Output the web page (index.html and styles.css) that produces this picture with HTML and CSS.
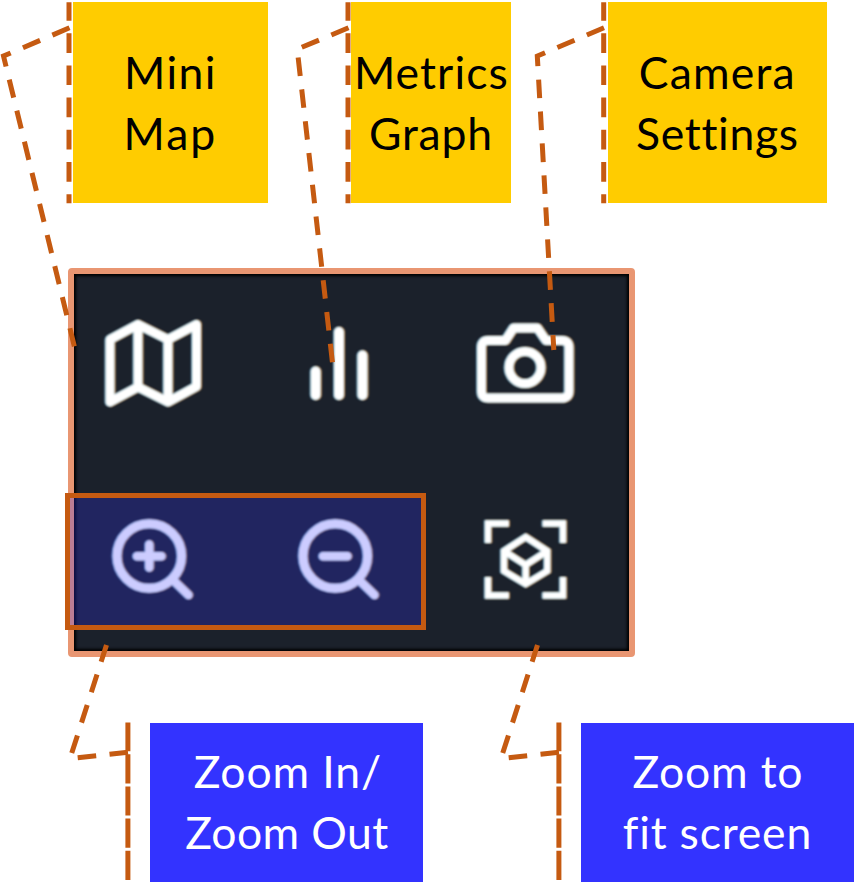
FILE: index.html
```html
<!DOCTYPE html>
<html lang="en">
<head>
<meta charset="utf-8">
<title>View controls</title>
<link rel="stylesheet" href="styles.css">
</head>
<body>
<main class="diagram">
  <div class="labels labels-top">
    <div class="label yellow"><span class="mini">Mini</span><span class="map">Map</span></div>
    <div class="label yellow"><span class="metrics">Metrics</span><span class="graph">Graph</span></div>
    <div class="label yellow"><span class="camera">Camera</span><span class="settings">Settings</span></div>
  </div>

  <section class="panel">
    <svg class="icon" viewBox="97 308 112 112"><path stroke-width="9" d="M110 339.500 138 324.500 168 339.500 196.500 324.500V386.500L168 402 138 387 110 402ZM138 324.500V387M168 339.500V402"/></svg>
    <svg class="icon" viewBox="283 308 112 112"><path stroke-width="10" d="M315.700 371.500V395M339 332V395M362.500 355.500V395"/></svg>
    <svg class="icon" viewBox="469 308 112 112"><path stroke-width="9" d="M488 340.500H505.500L513.500 328H537.500L546 340.500H562Q569 340.500 569 347.500V391Q569 398 562 398H488Q481.500 398 481.500 391V347.500Q481.500 340.500 488 340.500Z"/><circle cx="525" cy="367.500" r="16" stroke-width="9"/></svg>
    <svg class="icon" viewBox="97 503 112 112"><circle cx="149.300" cy="556" r="32.300" stroke-width="9"/><path stroke-width="8.500" d="M173 580 188.500 595M137 556.300H161.500M149.300 544.500V567.500"/></svg>
    <svg class="icon" viewBox="283 503 112 112"><circle cx="335.300" cy="556" r="32.300" stroke-width="9"/><path stroke-width="8.500" d="M359 580 374.500 595M323 556.300H347.500"/></svg>
    <svg class="icon square" viewBox="469 503 112 112"><path stroke-width="6.500" d="M509 523.500H488V543M542.500 523.500H563V543M509 595.500H488V577M542.500 595.500H563V577"/><path stroke-width="6.500" d="M525.700 537 547.300 551V571L525.700 584 504 571V551ZM504 551 525.700 565 547.300 551M525.700 565V584"/></svg>
  </section>

  <div class="labels labels-bottom">
    <div class="label blue"><span class="zoom-in">Zoom In/</span><span class="zoom-out">Zoom Out</span></div>
    <div class="label blue"><span class="zoom-to">Zoom to</span><span class="fit">fit screen</span></div>
  </div>

  <div class="zoom-group"></div>
  <svg class="leaders" viewBox="0 0 855 893">
    <g class="leader">
      <path d="M69.500 27.800 3.500 56 74.500 347"/>
      <path d="M348.500 27.800 297.200 49.200 332.500 363"/>
      <path d="M604 27.800 537.300 56 553.800 350"/>
      <path d="M128 752.300 70 758.500 106.500 645"/>
      <path d="M559 752.300 501 758.500 537.500 645"/>
    </g>
    <path class="edge-top" d="M69 2.300V203.300M348 2.300V203.300M603.700 2.300V203.300"/>
    <path class="edge-bottom" d="M127.900 722.500V880M558.900 722.500V880"/>
  </svg>
</main>
</body>
</html>
```
FILE: styles.css
```css
* { box-sizing: border-box; }
body { margin: 0; background: #fff; }

.diagram {
  position: relative;
  width: 855px;
  height: 893px;
  overflow: hidden;
  font: 44.500px/61px Lato, "Liberation Sans", sans-serif;
  font-variant-ligatures: none;
}

.labels { display: grid; }
.labels-top {
  grid-template-columns: 195px 160px 219px;
  column-gap: 83px;
  padding: 2.400px 0 0 73.400px;
  height: 268px;
  grid-template-rows: 201px;
}
.labels-top .label:nth-child(3) { margin-left: 14px; margin-right: -14px; }
.labels-bottom {
  grid-template-columns: 273px 273px;
  column-gap: 158px;
  padding: 65.500px 0 0 150.400px;
  grid-template-rows: 159px;
}
.label {
  display: flex;
  flex-direction: column;
  align-items: center;
  justify-content: center;
  padding-bottom: 2px;
  white-space: nowrap;
}
.yellow { background: #fc0; color: #000; }
.blue { background: #33f; color: #fff; }

.mini { letter-spacing: 1.400px; margin-right: 1px; }
.map { letter-spacing: 2px; margin-right: 1px; }
.metrics { letter-spacing: 1.100px; }
.graph { letter-spacing: .800px; margin-right: 1px; }
.camera { letter-spacing: 1.200px; margin-right: 1px; }
.settings { letter-spacing: .700px; margin-right: 1px; }
.zoom-in { letter-spacing: .900px; margin-left: 2px; }
.zoom-out { letter-spacing: .400px; }
.zoom-to { letter-spacing: .800px; }
.fit { letter-spacing: .800px; margin-right: 1px; }

.panel {
  display: grid;
  grid-template-columns: repeat(3, 112px);
  grid-template-rows: repeat(2, 112px);
  gap: 83px 74px;
  width: 567.500px;
  height: 389px;
  margin-left: 67.500px;
  padding: 34px 0 0 23.500px;
  border: 6px solid #e99672;
  border-radius: 4px;
  background: #1b212b;
  box-shadow: inset 0 0 3px 2px #000;
}
.icon {
  width: 112px;
  height: 112px;
  fill: none;
  stroke: #fff;
  stroke-linecap: round;
  stroke-linejoin: round;
  filter: blur(.8px) drop-shadow(-1px 0 0 #4aa9df99) drop-shadow(1px 0 0 #d8934599);
}
.square { stroke-linecap: butt; stroke-linejoin: miter; }

.zoom-group {
  position: absolute;
  left: 65px;
  top: 493px;
  width: 361px;
  height: 137px;
  border: 5px solid #c55a11;
  background: rgba(51, 51, 255, .25);
  background-clip: padding-box;
}
.leaders {
  position: absolute;
  inset: 0;
  width: 855px;
  height: 893px;
  fill: none;
  stroke: #c55a11;
  stroke-width: 5;
}
.leader { stroke-dasharray: 18.600 13.400; }
.edge-top { stroke-dasharray: 19.700 12.500; stroke-dashoffset: 1.300; }
.edge-bottom { stroke-dasharray: 29.200 3; stroke-dashoffset: .5; }
```
